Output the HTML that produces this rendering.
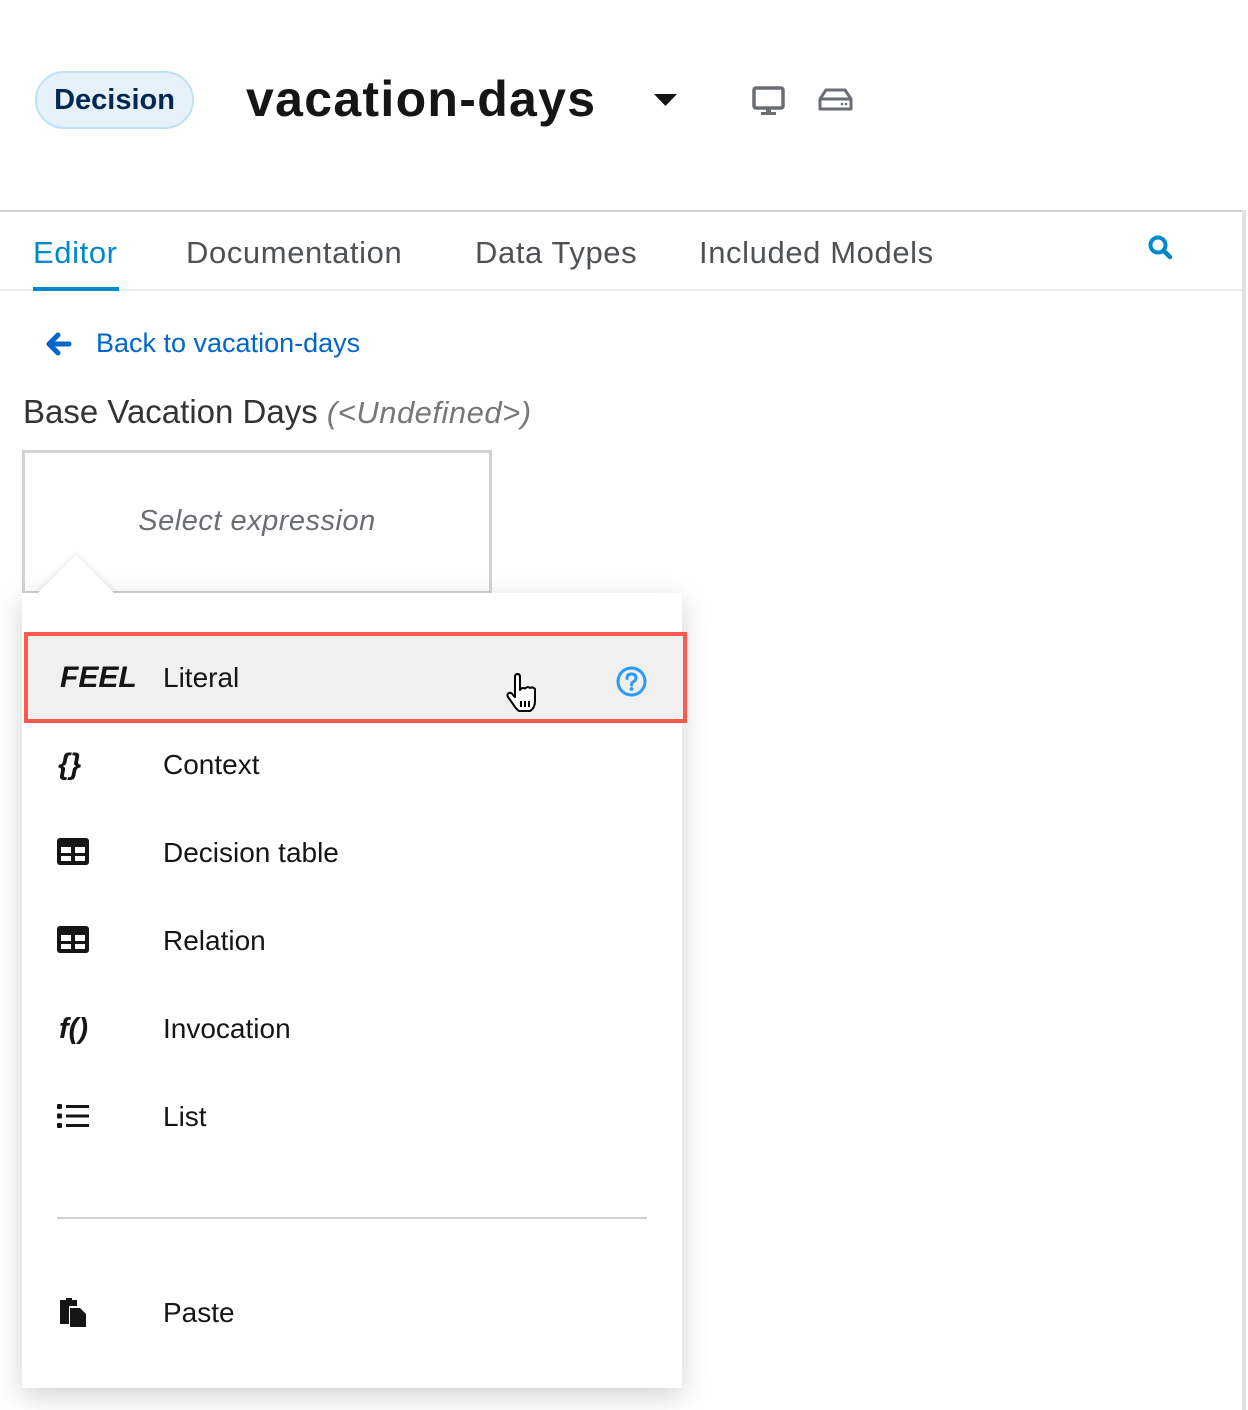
<!DOCTYPE html>
<html><head><meta charset="utf-8">
<style>
*{margin:0;padding:0;box-sizing:border-box}
html,body{width:1248px;height:1410px;background:#fff;overflow:hidden;font-family:"Liberation Sans",sans-serif;color:#151515}
.a{position:absolute}
.pill{left:35px;top:71px;width:159px;height:58px;border-radius:29px;background:#e7f1fa;border:2px solid #bee1f4;color:#002952;font-size:29px;font-weight:bold;text-align:center;line-height:54px}
.title{left:246px;top:70px;font-size:50px;font-weight:bold;color:#151515;letter-spacing:1.3px}
.tab{top:235px;font-size:31px;color:#4f5255;letter-spacing:0.6px}
.row{left:24px;width:663px;height:88px}
.lbl{position:absolute;left:139px;top:0;line-height:88px;font-size:28px;color:#151515}
</style></head><body>
<div class="a pill">Decision</div>
<div class="a title">vacation-days</div>
<svg class="a" style="left:654px;top:94px" width="24" height="14"><path d="M0 0H23L11.5 12Z" fill="#151515"/></svg>
<svg class="a" style="left:752px;top:86px" width="34" height="30" viewBox="0 0 34 30"><rect x="2" y="2" width="29" height="20" rx="2" fill="none" stroke="#6a6e73" stroke-width="3.5"/><rect x="14" y="22" width="5" height="5" fill="#6a6e73"/><rect x="9" y="26" width="15" height="3" fill="#6a6e73"/></svg>
<svg class="a" style="left:818px;top:88px" width="36" height="24" viewBox="0 0 36 24"><path d="M8 2H27L33 11V21H2V11Z" fill="none" stroke="#6a6e73" stroke-width="3" stroke-linejoin="round"/><path d="M2 11H33" stroke="#6a6e73" stroke-width="3"/><circle cx="24" cy="16" r="1.3" fill="#6a6e73"/><circle cx="28" cy="16" r="1.3" fill="#6a6e73"/></svg>
<div class="a" style="left:0;top:210px;width:1244px;height:2px;background:#d2d2d2"></div>
<div class="a" style="left:1242px;top:210px;width:4px;height:1200px;background:#e3e3e3"></div>
<div class="a tab" style="left:33px;color:#0088ce">Editor</div>
<div class="a tab" style="left:186px">Documentation</div>
<div class="a tab" style="left:475px">Data Types</div>
<div class="a tab" style="left:699px">Included Models</div>
<svg class="a" style="left:1147px;top:234px" width="28" height="28" viewBox="0 0 28 28"><circle cx="11" cy="11" r="7.5" fill="none" stroke="#0088ce" stroke-width="4"/><path d="M16.5 16.5L23 23" stroke="#0088ce" stroke-width="4.5" stroke-linecap="round"/></svg>
<div class="a" style="left:0;top:289px;width:1242px;height:2px;background:#ececec"></div>
<div class="a" style="left:33px;top:287px;width:86px;height:4px;background:#0088ce"></div>
<svg class="a" style="left:46px;top:332px" width="26" height="24" viewBox="0 0 26 24"><path d="M12 3L3 12L12 21M4 12H23" fill="none" stroke="#0066cc" stroke-width="5" stroke-linecap="round" stroke-linejoin="round"/></svg>
<div class="a" style="left:96px;top:328px;font-size:27px;color:#0066cc">Back to vacation-days</div>
<div class="a" style="left:23px;top:393px;font-size:33px;color:#333">Base Vacation Days <span style="font-style:italic;color:#777;font-size:31px;letter-spacing:0.5px">(&lt;Undefined&gt;)</span></div>
<div class="a" style="left:22px;top:450px;width:470px;height:144px;border:3px solid #d2d2d2;background:#fff"></div>
<div class="a" style="left:22px;top:505px;width:470px;text-align:center;font-size:29px;font-style:italic;color:#6a6e73;letter-spacing:0.5px">Select expression</div>
<div class="a" style="left:22px;top:593px;width:660px;height:795px;background:#fff;box-shadow:0 8px 26px rgba(0,0,0,0.18)"></div>
<svg class="a" style="left:30px;top:545px;overflow:visible" width="95" height="50"><defs><filter id="s" x="-30%" y="-30%" width="160%" height="160%"><feGaussianBlur stdDeviation="4"/></filter></defs><path d="M7 48L46 10L85 48Z" fill="#000" opacity=".12" filter="url(#s)"/><path d="M7 49L46 10L85 49Z" fill="#fff"/></svg>
<div class="a" style="left:22px;top:593px;width:660px;height:30px;background:#fff"></div>
<div class="a row" style="top:632px;height:91px;background:#f0f0f0;border:4px solid #fd5a4e">
 <div class="a" style="left:32px;top:0;line-height:83px;font-size:30px;font-weight:bold;font-style:italic;color:#151515">FEEL</div>
 <div class="lbl" style="left:135px;line-height:83px">Literal</div>
 <svg class="a" style="left:587px;top:29px" width="33" height="33" viewBox="0 0 33 33"><circle cx="16.5" cy="16.5" r="13.5" fill="none" stroke="#2b9af3" stroke-width="3"/><path d="M12 13.5Q12 9 16.5 9Q21 9 21 13Q21 15.5 18 17Q16.5 18 16.5 20" fill="none" stroke="#2b9af3" stroke-width="3" stroke-linecap="round"/><circle cx="16.5" cy="24" r="1.9" fill="#2b9af3"/></svg>
</div>
<svg class="a" style="left:505px;top:673px" width="36" height="42" viewBox="0 0 36 42"><path d="M10 4Q10 1 12.5 1Q15 1 15 4V17Q17 14 20 15.5Q22.5 13 25 15Q28 13.5 30 16V28Q30 35 25 38H14Q11 36 8 31L3 24Q1.5 21 4 20Q6 19 8 22L10 24Z" fill="#fff" stroke="#000" stroke-width="2" stroke-linejoin="round"/><path d="M16 28V34M20 28V34M24 28V34" stroke="#000" stroke-width="2"/></svg>
<div class="a row" style="top:721px"><div class="a" style="left:34px;line-height:88px;font-size:30px;font-style:italic;font-weight:bold">{}</div><div class="lbl">Context</div></div>
<div class="a row" style="top:809px"><svg class="a" style="left:33px;top:29px" width="32" height="27" viewBox="0 0 32 27"><rect width="32" height="27" rx="3" fill="#151515"/><rect x="4" y="9" width="10" height="6" fill="#fff"/><rect x="18" y="9" width="10" height="6" fill="#fff"/><rect x="4" y="18" width="10" height="5" fill="#fff"/><rect x="18" y="18" width="10" height="5" fill="#fff"/></svg><div class="lbl">Decision table</div></div>
<div class="a row" style="top:897px"><svg class="a" style="left:33px;top:29px" width="32" height="27" viewBox="0 0 32 27"><rect width="32" height="27" rx="3" fill="#151515"/><rect x="4" y="9" width="10" height="6" fill="#fff"/><rect x="18" y="9" width="10" height="6" fill="#fff"/><rect x="4" y="18" width="10" height="5" fill="#fff"/><rect x="18" y="18" width="10" height="5" fill="#fff"/></svg><div class="lbl">Relation</div></div>
<div class="a row" style="top:985px"><div class="a" style="left:35px;line-height:88px;font-size:29px;font-style:italic;font-weight:bold">f()</div><div class="lbl">Invocation</div></div>
<div class="a row" style="top:1073px"><svg class="a" style="left:33px;top:31px" width="32" height="24" viewBox="0 0 32 24"><rect x="0" y="0" width="5" height="5" rx="1" fill="#151515"/><rect x="0" y="9.5" width="5" height="5" rx="1" fill="#151515"/><rect x="0" y="19" width="5" height="5" rx="1" fill="#151515"/><rect x="9" y="1" width="23" height="3" fill="#151515"/><rect x="9" y="10.5" width="23" height="3" fill="#151515"/><rect x="9" y="20" width="23" height="3" fill="#151515"/></svg><div class="lbl">List</div></div>
<div class="a" style="left:57px;top:1217px;width:590px;height:2px;background:#d2d2d2"></div>
<div class="a row" style="top:1269px"><svg class="a" style="left:34px;top:27px" width="30" height="32" viewBox="0 0 30 32"><path d="M2 4H8V2H14V4H19V10H11V28H2Z" fill="#151515"/><path d="M12 12H22L28 18V31H12Z" fill="#151515"/></svg><div class="lbl">Paste</div></div>
</body></html>
